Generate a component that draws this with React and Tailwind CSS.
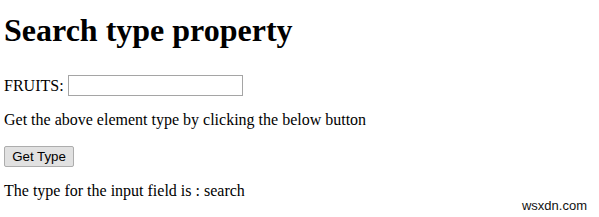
export default function App() {
  return (
    <div className="relative min-h-[217px] bg-white pl-[4px] text-black font-['Liberation_Serif',serif]">
      <h1 className="pt-[12px] text-[32px] font-bold leading-[37px]">Search type property</h1>

      <div className="mt-[26px] flex h-[21px] items-center text-[16px] leading-[18px]">
        <span>FRUITS:</span>
        <input
          type="search"
          className="ml-[4px] h-[21px] w-[175px] border border-[#a5a5a5] bg-white px-[2px] text-[13px] outline-none font-['Liberation_Sans',sans-serif]"
        />
      </div>

      <p className="mt-[15px] text-[16px] leading-[18px]">
        Get the above element type by clicking the below button
      </p>

      <button className="mt-[17px] block h-[21px] w-[70px] rounded-[2px] border border-[#adadad] bg-[#e1e1e1] text-center text-[13.3px] leading-[19px] font-['Liberation_Sans',sans-serif]">
        Get Type
      </button>

      <p className="mt-[15px] text-[16px] leading-[18px]">
        The type for the input field is : search
      </p>

      <span className="absolute right-[12px] top-[198px] text-[13px] leading-[15px] text-[#111] font-['Liberation_Sans',sans-serif]">
        wsxdn.com
      </span>
    </div>
  );
}
